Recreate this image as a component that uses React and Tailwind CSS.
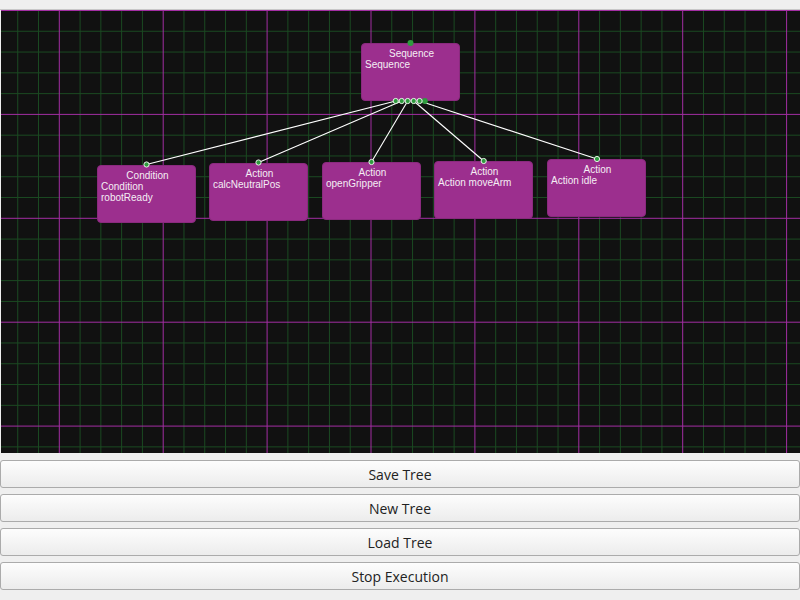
const GRID = 20.78;

const nodes = [
  { id: "seq", x: 360, y: 33, title: "Sequence", lines: ["Sequence"] },
  { id: "cond", x: 96, y: 155, title: "Condition", lines: ["Condition", "robotReady"] },
  { id: "calc", x: 208, y: 153, title: "Action", lines: ["calcNeutralPos"] },
  { id: "open", x: 321, y: 152, title: "Action", lines: ["openGripper"] },
  { id: "move", x: 433, y: 151, title: "Action", lines: ["Action moveArm"] },
  { id: "idle", x: 546, y: 149, title: "Action", lines: ["Action idle"] },
];

const outPorts = [394.7, 400.7, 406.7, 412.7, 418.6];
const inPorts = [
  [145.5, 154.5],
  [257.5, 152.5],
  [370.5, 152],
  [482.7, 151],
  [596, 149],
];

function Grid() {
  const v = [];
  const h = [];
  for (let k = -3; k < 40; k++) {
    const x = 58.3 + GRID * k;
    if (x > 0 && x < 800) v.push({ x, major: ((k % 5) + 5) % 5 === 0 });
  }
  for (let k = 0; k < 22; k++) {
    const y = 0.5 + GRID * k;
    if (y < 443) h.push({ y, major: k % 5 === 0 });
  }
  const all = [
    ...v.map((l) => ({ ...l, vert: true })),
    ...h.map((l) => ({ ...l, vert: false })),
  ];
  return (
    <>
      {all
        .filter((l) => !l.major)
        .map((l, i) =>
          l.vert ? (
            <line key={"g" + i} x1={l.x} y1={0} x2={l.x} y2={443} stroke="#1b4a22" strokeWidth="1" />
          ) : (
            <line key={"g" + i} x1={0} y1={l.y} x2={800} y2={l.y} stroke="#1b4a22" strokeWidth="1" />
          )
        )}
      {all
        .filter((l) => l.major)
        .map((l, i) =>
          l.vert ? (
            <line key={"m" + i} x1={l.x} y1={0} x2={l.x} y2={443} stroke="#a32ea3" strokeWidth="1" />
          ) : (
            <line key={"m" + i} x1={0} y1={l.y} x2={800} y2={l.y} stroke="#a32ea3" strokeWidth="1" />
          )
        )}
    </>
  );
}

function Node({ node }) {
  return (
    <div
      className="absolute w-[99px] h-[58px] rounded-[4px] bg-[#9c2f8e] border border-[#8a2a7e] text-[#f4eef4] text-[10px] leading-[11px] font-['Liberation_Sans',sans-serif]"
      style={{ left: node.x, top: node.y }}
    >
      <div className="text-center pt-[4px] pl-[2px]">{node.title}</div>
      <div className="pl-[3px]">
        {node.lines.map((l) => (
          <div key={l}>{l}</div>
        ))}
      </div>
    </div>
  );
}

export default function App() {
  const buttons = ["Save Tree", "New Tree", "Load Tree", "Stop Execution"];

  return (
    <div className="w-[800px] h-[600px] bg-[#efefef] flex flex-col overflow-hidden">
      <div className="h-[10px] border-b border-[#c8c8c8]" />
      <div className="relative ml-[1px] h-[443px] bg-[#111111] overflow-hidden">
        <svg className="absolute inset-0" width="799" height="443">
          <Grid />
        </svg>
        {nodes.map((n) => (
          <Node key={n.id} node={n} />
        ))}
        <svg className="absolute inset-0 pointer-events-none" width="799" height="443">
          {outPorts.map((x, i) => (
            <line
              key={"e" + i}
              x1={x}
              y1={91}
              x2={inPorts[i][0]}
              y2={inPorts[i][1]}
              stroke="#ffffff"
              strokeWidth="1.1"
            />
          ))}
          <circle cx={409.5} cy={33} r={3} fill="#2f9b3f" />
          <circle cx={423.8} cy={91} r={3} fill="#2f9b3f" />
          {outPorts.map((x, i) => (
            <circle key={"o" + i} cx={x} cy={91} r={2.6} fill="#2f9b3f" stroke="#e8f5e8" strokeWidth="1" />
          ))}
          {inPorts.map(([x, y], i) => (
            <circle key={"i" + i} cx={x} cy={y} r={2.6} fill="#2f9b3f" stroke="#e8f5e8" strokeWidth="1" />
          ))}
        </svg>
      </div>
      <div className="flex flex-col gap-[6px] pt-[7px]">
        {buttons.map((b) => (
          <button
            key={b}
            className="h-[28px] w-full rounded-[3px] border border-[#ababab] bg-gradient-to-b from-[#fdfdfd] to-[#ececec] text-[14px] text-[#222222] font-['Open_Sans',sans-serif]"
          >
            {b}
          </button>
        ))}
      </div>
    </div>
  );
}
